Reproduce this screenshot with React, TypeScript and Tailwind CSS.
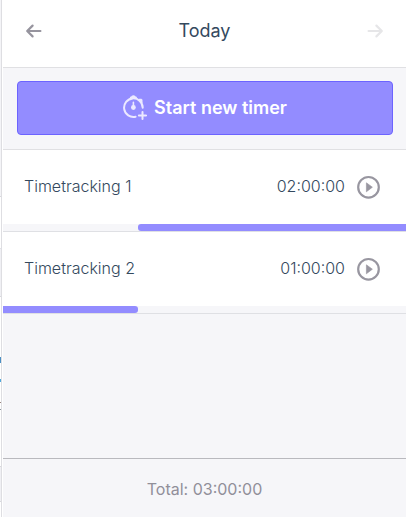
type Entry = {
  id: number;
  name: string;
  time: string;
  start: number;
  end: number;
};

// start / end are percentages of the tracked day
const entries: Entry[] = [
  { id: 1, name: 'Timetracking 1', time: '02:00:00', start: 33.5, end: 100 },
  { id: 2, name: 'Timetracking 2', time: '01:00:00', start: 0, end: 33.5 },
];

function ArrowIcon({ flipped = false }: { flipped?: boolean }) {
  return (
    <svg
      width="20"
      height="20"
      viewBox="0 0 20 20"
      fill="none"
      stroke="currentColor"
      strokeWidth="2.2"
      strokeLinecap="round"
      strokeLinejoin="round"
      className={flipped ? 'rotate-180' : ''}
      aria-hidden="true"
    >
      <path d="M16.4 10 H3.4 M8.6 4.6 L3.2 10 L8.6 15.4" />
    </svg>
  );
}

/* Stopwatch with a small plus in the lower right corner */
function TimerPlusIcon() {
  return (
    <svg width="24" height="26" viewBox="0 0 24 26" fill="none" aria-hidden="true">
      <path
        d="M12.6 21.7 A9.3 9.3 0 1 1 19.7 12.8"
        stroke="currentColor"
        strokeWidth="2"
        strokeLinecap="round"
      />
      <path d="M6.4 4 L7.2 1.8 Q8.4 1.6 8.8 0.8 Q9.4 0.2 10.4 0.2 Q11.4 0.2 12 0.8 Q12.4 1.6 13.6 1.8 L14.4 4 Z" fill="currentColor" />
      <path d="M15 5.2 L16.2 3.8 H18.4 L19.5 4.8 V7.2 L18.4 8.4 Z" fill="currentColor" />
      <path d="M10.4 7.4 V12" stroke="currentColor" strokeWidth="1.6" strokeLinecap="round" />
      <circle cx="10.4" cy="12.5" r="2.4" fill="currentColor" />
      <path d="M19.5 16.9 V24.1 M15.9 20.5 H23.1" stroke="currentColor" strokeWidth="2" strokeLinecap="round" />
    </svg>
  );
}

function PlayIcon() {
  return (
    <svg width="24" height="24" viewBox="0 0 24 24" fill="none" aria-hidden="true">
      <circle cx="11.5" cy="12.3" r="10.3" stroke="currentColor" strokeWidth="2.2" />
      <path d="M9.4 7.8 L15.4 12.2 L9.4 16.8 Z" fill="currentColor" stroke="currentColor" strokeWidth="0.6" />
    </svg>
  );
}

/* Edge of the page that stays visible beside the panel */
function PageEdge() {
  return (
    <div className="flex w-px shrink-0 flex-col bg-white" aria-hidden="true">
      <div className="h-[197px] border-b border-[#d8d8dc] bg-[#f4f4f7]" />
      <div className="h-[52px] border-b border-[#e2e2e6]" />
      <div className="h-12 border-b border-[#d8d8dc] bg-[#f0f0f4]" />
      <div className="mt-[60px] h-[6px] bg-[#4b8fc4]" />
      <div className="mt-4 h-[3px] bg-[#4fa8dc]" />
      <div className="mt-5 h-px bg-[#9b8580]" />
      <div className="mt-1.5 h-px bg-[#8a949c]" />
      <div className="mt-14 h-9 border-y border-[#d8d8dc] bg-[#f0f0f4]" />
    </div>
  );
}

function EntryRow({ entry }: { entry: Entry }) {
  return (
    <li className="border-b border-[#dfe0e4]">
      <div className="flex h-[74px] items-center bg-white pr-[25px] pl-[21px] text-base text-[#34495e]">
        <span className="flex-1 pb-0.5 font-light">{entry.name}</span>
        <span className="mr-3 pb-0.5 font-light">{entry.time}</span>
        <button type="button" aria-label={`Start ${entry.name}`} className="text-[#9896a0]">
          <PlayIcon />
        </button>
      </div>
      <div className="h-[7px] overflow-hidden bg-[#f6f6f9]">
        <div
          className={`h-full bg-[#938cff] ${entry.start > 0 ? 'rounded-l-[3px]' : 'rounded-r-[3px]'}`}
          style={{ marginLeft: `${entry.start}%`, width: `${entry.end - entry.start}%` }}
        />
      </div>
    </li>
  );
}

export default function App() {
  return (
    <div className="flex min-h-screen bg-white font-['Inter','Liberation_Sans',sans-serif]">
      <PageEdge />
      <main className="flex flex-1 flex-col border-l border-[#dedee2] bg-white pl-px">
        <header className="flex h-[68px] items-center justify-between border-b border-[#e0e0e3] px-[21px] pb-1.5">
          <button type="button" aria-label="Previous day" className="text-[#96949e]">
            <ArrowIcon />
          </button>
          <h1 className="text-lg text-[#34495e]">Today</h1>
          <button type="button" aria-label="Next day" disabled className="text-[#e6e6e8]">
            <ArrowIcon flipped />
          </button>
        </header>

        <div className="flex flex-1 flex-col bg-[#f6f6f9]">
          <div className="border-b border-[#e0e0e3] pt-[13px] pr-[13px] pb-3.5 pl-3.5">
            <button
              type="button"
              className="flex h-[54px] w-full items-center justify-center gap-[7px] rounded-[4px] border border-[#6c63ff] bg-[#938cff] text-lg font-semibold text-white"
            >
              <span className="text-[#ece9ff]">
                <TimerPlusIcon />
              </span>
              Start new timer
            </button>
          </div>

          <ul className="flex-1">
            {entries.map((entry) => (
              <EntryRow key={entry.id} entry={entry} />
            ))}
          </ul>

          <footer className="flex h-[59px] items-center justify-center border-t border-[#b9b9be] pt-0.5 text-base text-[#918f99]">
            Total: 03:00:00
          </footer>
        </div>
      </main>
    </div>
  );
}
